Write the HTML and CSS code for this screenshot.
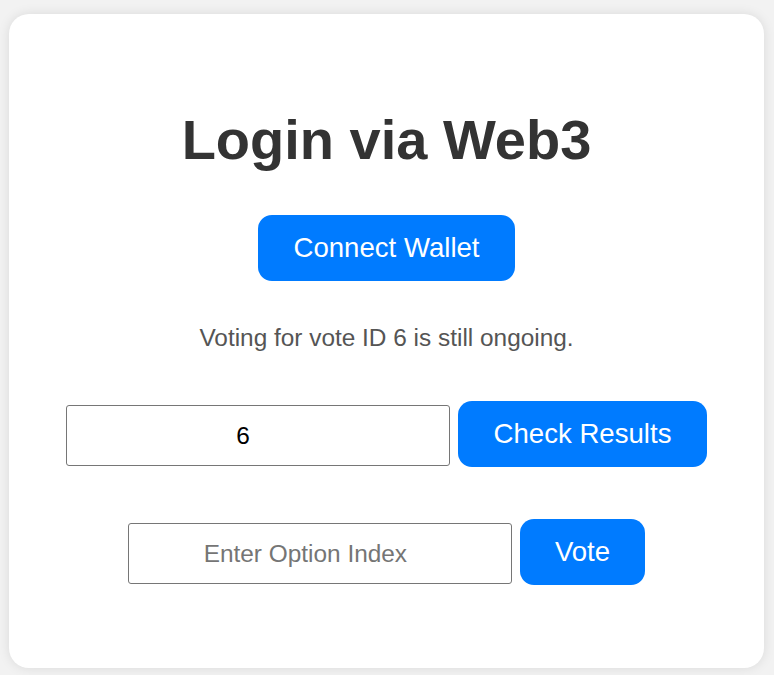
FILE: index.html
```html
<!DOCTYPE html>
<html lang="en">
<head>
<meta charset="utf-8">
<title>Login via Web3</title>
<link rel="stylesheet" href="styles.css">
</head>
<body>
<div class="card">
  <h1 class="title">Login via Web3</h1>
  <button class="btn">Connect Wallet</button>
  <p class="status">Voting for vote ID 6 is still ongoing.</p>
  <div class="row row-results">
    <input class="field" type="number" value="6">
    <button class="btn btn-wide">Check Results</button>
  </div>
  <div class="row row-vote">
    <input class="field" type="number" placeholder="Enter Option Index">
    <button class="btn">Vote</button>
  </div>
</div>
</body>
</html>
```
FILE: styles.css
```css
html, body {
  margin: 0;
  background: #f2f2f2;
}
body {
  padding: 14px 10px 7px 9px;
  font-family: "Liberation Sans", Arial, sans-serif;
}
.card {
  box-sizing: border-box;
  height: 654px;
  background: #ffffff;
  border-radius: 20px;
  box-shadow: 0 0 12px rgba(0, 0, 0, 0.1);
  padding-top: 94px;
  display: flex;
  flex-direction: column;
  align-items: center;
}
.title {
  margin: 0;
  font-size: 56px;
  line-height: 64px;
  font-weight: bold;
  color: #333333;
}
.btn {
  height: 66px;
  padding: 0 35px;
  border: none;
  border-radius: 14px;
  background: #007bff;
  color: #ffffff;
  font-family: "Liberation Sans", Arial, sans-serif;
  font-size: 27.6px;
  line-height: 1;
  cursor: pointer;
}
.btn-wide {
  padding: 0 36px;
}
.card > .btn {
  margin-top: 43px;
}
.status {
  margin: 43px 0 0;
  font-size: 24.4px;
  line-height: 28px;
  color: #555555;
}
.row {
  display: flex;
  align-items: flex-start;
  gap: 8px;
}
.row-results {
  margin-top: 49px;
}
.row-vote {
  margin-top: 52px;
}
.field {
  box-sizing: border-box;
  width: 384px;
  height: 61px;
  margin-top: 4px;
  border: 1px solid #767676;
  border-radius: 3px;
  padding: 0 17px 0 3px;
  font-family: "Liberation Sans", Arial, sans-serif;
  font-size: 24.4px;
  text-align: center;
  color: #000000;
  background: #ffffff;
}
.field::placeholder {
  color: #757575;
}
```
